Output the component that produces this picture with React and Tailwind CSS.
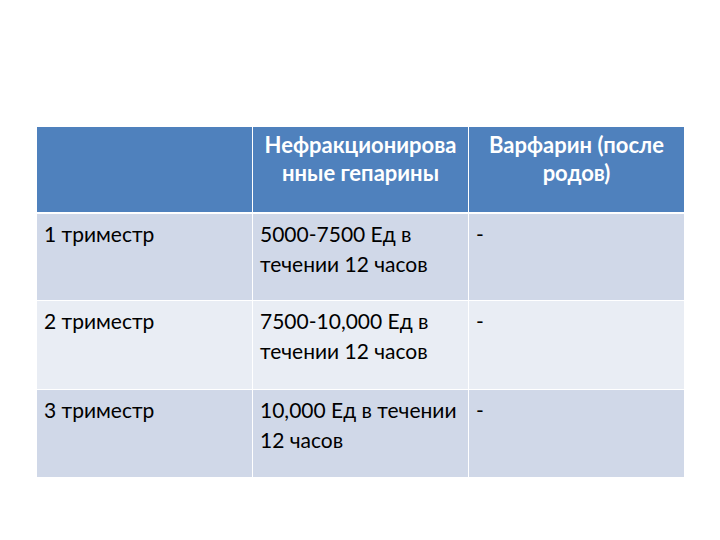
export default function App() {
  const rows = [
    ["1 триместр", "5000-7500 Ед в течении 12 часов", "-", "bg-[#d0d8e8]", "h-[86px]"],
    ["2 триместр", "7500-10,000 Ед в течении 12 часов", "-", "bg-[#e9edf4]", "h-[88px]"],
    ["3 триместр", "10,000 Ед в течении 12 часов", "-", "bg-[#d0d8e8]", "h-[87px]"],
  ];
  return (
    <div className="w-[720px] h-[540px] bg-white pt-[127px] pl-[37px]" style={{ fontFamily: "Lato, 'Open Sans', sans-serif" }}>
      <div className="w-[647px] flex flex-col gap-y-[1px]">
        <div className="flex gap-x-[1px] h-[85px] mb-[1px]">
          <div className="w-[215px] bg-[#4f81bd]" />
          <div className="w-[215px] bg-[#4f81bd] text-white font-bold text-[22px] leading-[28px] text-center pt-[4px] px-[4px]">
            Нефракционирова нные гепарины
          </div>
          <div className="w-[215px] bg-[#4f81bd] text-white font-bold text-[22px] leading-[28px] text-center pt-[4px] px-[4px]">
            Варфарин (после родов)
          </div>
        </div>
        {rows.map((r, i) => (
          <div key={i} className={`flex gap-x-[1px] ${r[4]}`}>
            <div className={`w-[215px] ${r[3]} text-black text-[21px] leading-[30px] pt-[5px] px-[7px]`}>{r[0]}</div>
            <div className={`w-[215px] ${r[3]} text-black text-[21px] leading-[30px] pt-[5px] pl-[7px] pr-[2px]`}>{r[1]}</div>
            <div className={`w-[215px] ${r[3]} text-black text-[21px] leading-[30px] pt-[5px] px-[7px]`}>{r[2]}</div>
          </div>
        ))}
      </div>
    </div>
  );
}
